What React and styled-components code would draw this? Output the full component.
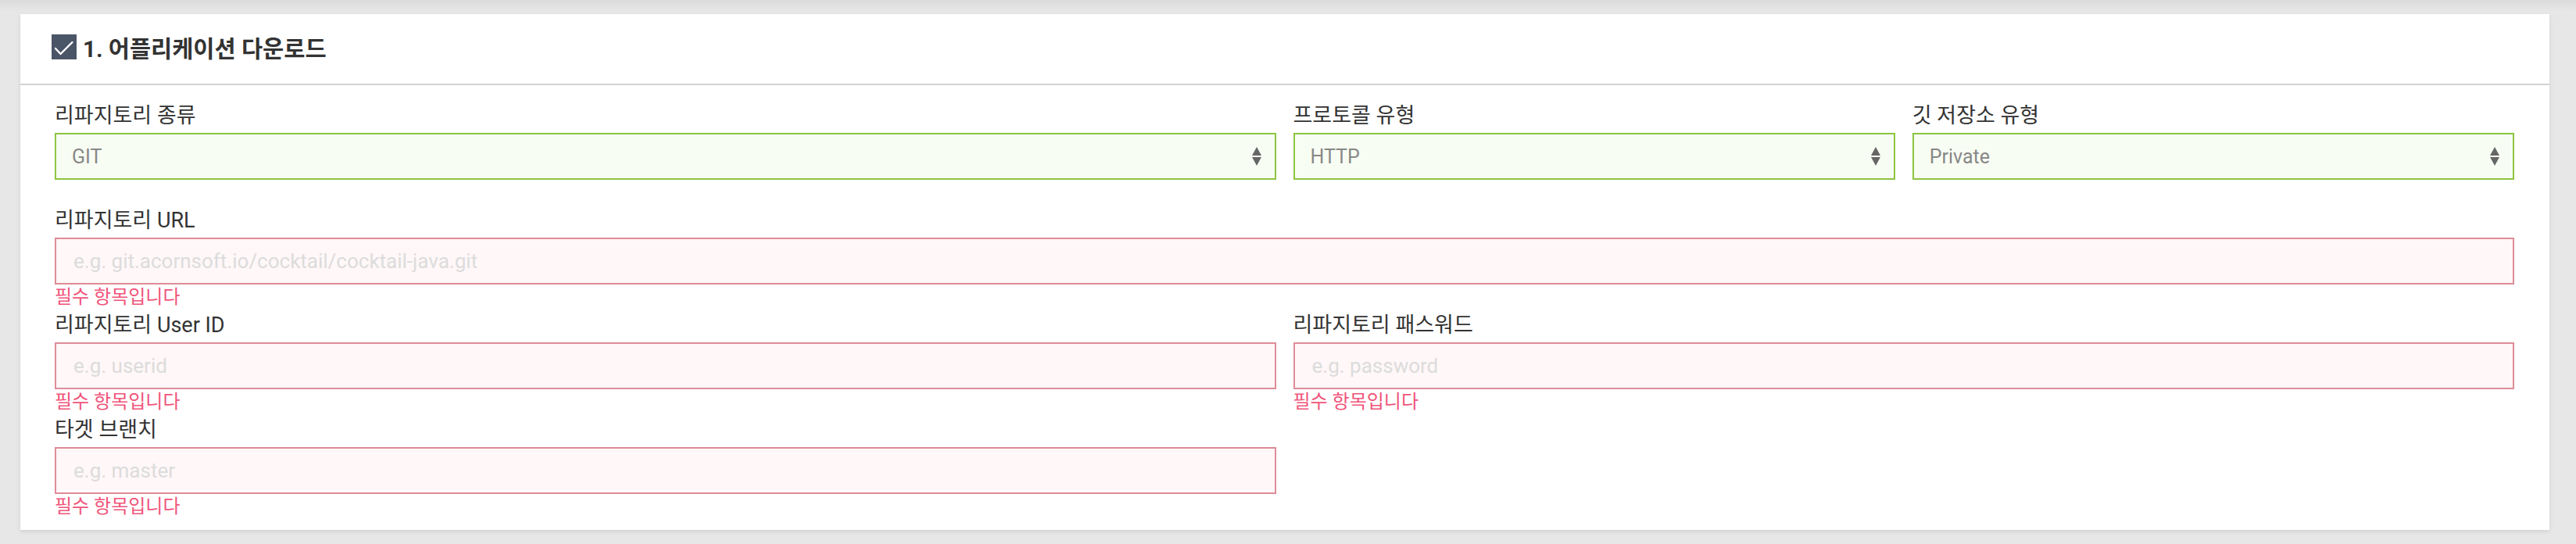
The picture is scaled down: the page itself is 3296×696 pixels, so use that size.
import styled, { createGlobalStyle } from 'styled-components';

const GlobalStyle = createGlobalStyle`
  html, body {
    margin: 0;
    padding: 0;
  }
  body {
    background: #e7e7e7;
    font-family: Roboto, "Noto Sans CJK KR", sans-serif;
    color: #333;
  }
`;

const fields = [
  { label: '리파지토리 종류', span: 2, select: 'GIT' },
  { label: '프로토콜 유형', span: 1, select: 'HTTP' },
  { label: '깃 저장소 유형', span: 1, select: 'Private' },
  { label: '리파지토리 URL', span: 4, placeholder: 'e.g. git.acornsoft.io/cocktail/cocktail-java.git', error: true },
  { label: '리파지토리 User ID', span: 2, placeholder: 'e.g. userid', error: true },
  { label: '리파지토리 패스워드', span: 2, placeholder: 'e.g. password', error: true },
  { label: '타겟 브랜치', span: 2, placeholder: 'e.g. master', error: true },
];

export default function App() {
  return (
    <>
      <GlobalStyle />
      <Page>
        <Card>
          <Header>
            <CheckIcon />
            <Title>1. 어플리케이션 다운로드</Title>
          </Header>

          <Form>
            {fields.map((f) => (
              <Field key={f.label} $span={f.span}>
                <Label>{f.label}</Label>
                {f.select ? (
                  <SelectBox>
                    <span>{f.select}</span>
                    <SortArrows />
                  </SelectBox>
                ) : (
                  <Input placeholder={f.placeholder} />
                )}
                <ErrorText>{f.error ? '필수 항목입니다' : ''}</ErrorText>
              </Field>
            ))}
          </Form>
        </Card>
      </Page>
    </>
  );
}

function CheckIcon() {
  return (
    <CheckBox viewBox="0 0 32 32">
      <rect width="32" height="32" fill="#4a5567" />
      <path d="M5 18 L11.5 25 L26.5 10" fill="none" stroke="#fff" strokeWidth="2.4" strokeLinecap="round" strokeLinejoin="round" />
    </CheckBox>
  );
}

function SortArrows() {
  return (
    <Arrows viewBox="0 0 12 24">
      <polygon points="6,0 12,11 0,11" fill="#666" />
      <polygon points="0,13 12,13 6,24" fill="#666" />
    </Arrows>
  );
}

const Page = styled.div`
  min-height: 696px;
  padding: 18px 34px 18px 26px;
  box-sizing: border-box;
  background: linear-gradient(to bottom, #dcdcdc 0, #e7e7e7 15px, #e7e7e7 100%);
`;

const Card = styled.section`
  background: #fff;
  box-shadow: 0 2px 5px rgba(0, 0, 0, 0.1);
`;

const Header = styled.div`
  display: flex;
  align-items: center;
  gap: 8px;
  height: 89px;
  padding: 0 40px;
  border-bottom: 2px solid #d2d2d2;
`;

const CheckBox = styled.svg`
  width: 32px;
  height: 32px;
  flex: none;
  margin-top: -5px;
`;

const Title = styled.h2`
  margin: 0;
  font-size: 29.5px;
  font-weight: 700;
  line-height: 36px;
  color: #333;
`;

const Form = styled.div`
  display: grid;
  grid-template-columns: repeat(4, 1fr);
  column-gap: 22px;
  padding: 17px 45px 16px 44px;
`;

const Field = styled.div`
  grid-column: span ${(p) => p.$span};
  display: flex;
  flex-direction: column;
  min-width: 0;
`;

const Label = styled.label`
  display: block;
  font-size: 27px;
  line-height: 30px;
  padding-top: 7px;
  margin-bottom: 7px;
  color: #333;
  white-space: nowrap;
`;

const SelectBox = styled.div`
  display: flex;
  align-items: center;
  justify-content: space-between;
  height: 60px;
  box-sizing: border-box;
  padding: 0 17px 0 20px;
  border: 2px solid #8cc540;
  background: #f8fdf3;
  font-size: 25px;
  color: #888;
`;

const Arrows = styled.svg`
  width: 12px;
  height: 24px;
  flex: none;
`;

const Input = styled.input`
  display: block;
  width: 100%;
  height: 60px;
  box-sizing: border-box;
  padding: 0 22px;
  border: 2px solid #dd8c97;
  background: #fff7f8;
  font-family: Roboto, "Noto Sans CJK KR", sans-serif;
  font-size: 26px;
  color: #333;
  outline: none;

  &::placeholder {
    color: #dcdcdc;
  }
`;

const ErrorText = styled.div`
  min-height: 26px;
  margin: 3px 0 1px;
  font-size: 24px;
  line-height: 26px;
  color: #f0547a;
  white-space: nowrap;
`;
